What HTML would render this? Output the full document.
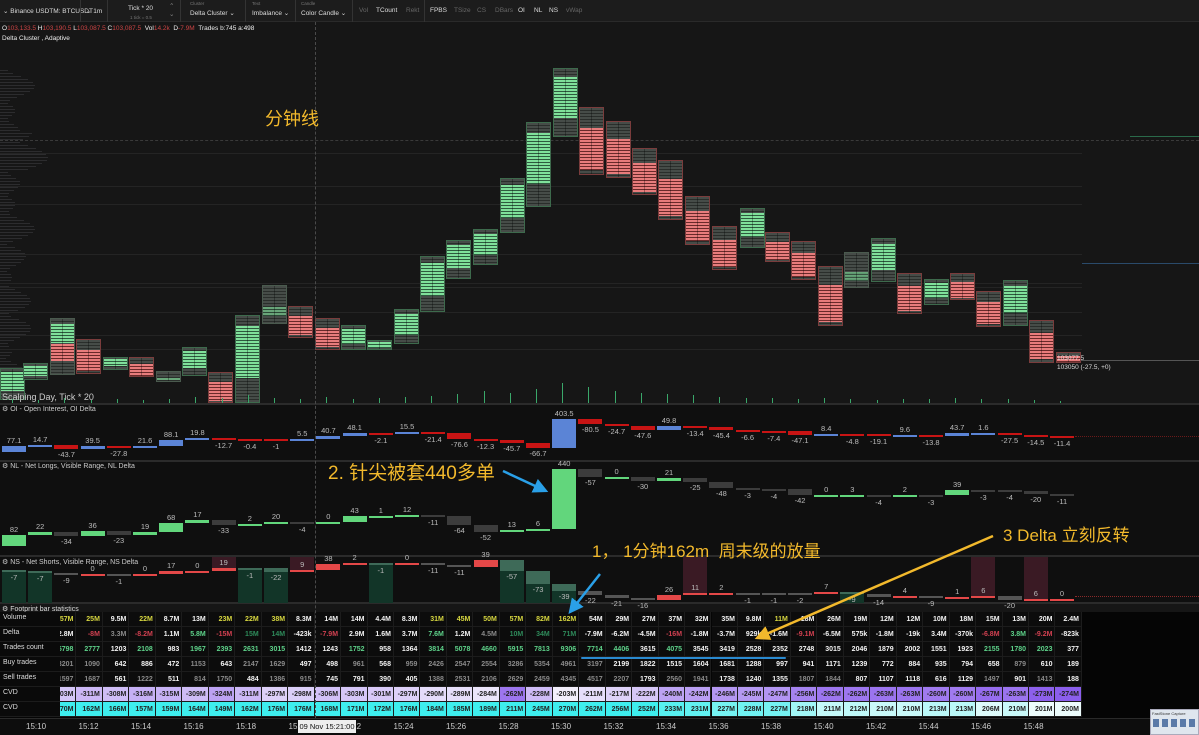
<!DOCTYPE html>
<html><head><meta charset="utf-8">
<style>
*{margin:0;padding:0;box-sizing:border-box}
body{width:1199px;height:735px;background:#161616;position:relative;overflow:hidden;font-family:"Liberation Sans","Noto Sans CJK SC",sans-serif;color:#ccc}
.a{position:absolute}
.tb{left:0;top:0;width:1199px;height:22px;background:#1c1c1c;border-bottom:1px solid #2a2a2a;font-size:6.5px;color:#ddd}
.tb span{position:absolute;top:7px;white-space:nowrap}
.tb .d{color:#666}
.tb small{position:absolute;top:1px;font-size:4.5px;color:#777;white-space:nowrap}
.sep{position:absolute;top:0;width:1px;height:22px;background:#333}
.lbl{font-size:7px;color:#ccc;white-space:nowrap}
.c{position:absolute;border:1px solid}
.z{position:absolute;left:0;right:0}
.cell{position:absolute;height:15px;font-size:7px;font-weight:bold;text-align:right;padding-right:2px;line-height:15px;border-right:1px solid #1c1c1c;border-bottom:1px solid #1c1c1c;overflow:hidden;white-space:nowrap}
.ann{color:#f2b92c;white-space:nowrap;font-family:"Liberation Sans","Noto Sans CJK SC",sans-serif}
.v{position:absolute;font-size:7.5px;color:#bbb;white-space:nowrap;transform:translateX(-50%)}
</style></head><body>
<div class="a tb">
<span style="left:3px">⌄ Binance USDTM: BTCUSDT</span><div class="sep" style="left:80px"></div>
<span style="left:86px">⌄ 1m</span><div class="sep" style="left:107px"></div>
<span style="left:128px;top:5px">Tick * 20</span><small style="left:130px;top:15px">1 tick = 0.5</small>
<span style="left:169px;top:2px;color:#888">⌃</span><span style="left:169px;top:10px;color:#888">⌄</span><div class="sep" style="left:180px"></div>
<small style="left:190px">Cluster</small><span style="left:190px;top:9px">Delta Cluster ⌄</span><div class="sep" style="left:245px"></div>
<small style="left:252px">Text</small><span style="left:252px;top:9px">Imbalance ⌄</span><div class="sep" style="left:295px"></div>
<small style="left:301px">Candle</small><span style="left:301px;top:9px">Color Candle ⌄</span><div class="sep" style="left:352px"></div>
<span class="d" style="left:359px">Vol</span><span style="left:376px">TCount</span><span class="d" style="left:406px">Rekt</span><div class="sep" style="left:424px"></div>
<span style="left:430px">FPBS</span><span class="d" style="left:454px">TSize</span><span class="d" style="left:477px">CS</span><span class="d" style="left:495px">DBars</span><span style="left:518px">OI</span><span style="left:534px">NL</span><span style="left:549px">NS</span><span class="d" style="left:566px">vWap</span>
</div>
<div class="a lbl" style="left:2px;top:25px;color:#eee;font-size:6.5px">O<span style="color:#c44">103,133.5</span> H<span style="color:#c44">103,190.5</span> L<span style="color:#c44">103,087.5</span> C<span style="color:#c44">103,087.5</span> &nbsp;Vol<span style="color:#c44">14.2k</span> &nbsp;D<span style="color:#c44">-7.9M</span> &nbsp;Trades b:745 a:498</div>
<div class="a lbl" style="left:2px;top:35px;color:#eee;font-size:6.5px">Delta Cluster , Adaptive</div>
<div id="root"></div>
<script>
var h='';
function A(s){h+=s}
for(var y=70;y<400;y+=3){var w=6+Math.abs(Math.sin(y*0.13)*18+Math.sin(y*0.05)*12);if(y>130&&y<170)w+=12;A('<div class="a" style="left:0;top:'+y+'px;width:'+w+'px;height:1px;background:#2c2c2e"></div>')}
[153,186,204,254,283,287,312,335,349].forEach(function(y){A('<div class="a" style="left:0;top:'+y+'px;width:1082px;height:1px;background:#242424"></div>')});
A('<div class="a" style="left:0;top:140px;width:1199px;border-top:1px dashed #3a3a3a"></div>');
A('<div class="a" style="left:1082px;top:263px;width:117px;height:1px;background:#2a4a6a"></div>');
A('<div class="a" style="left:1130px;top:136px;width:69px;height:1px;background:#2a6a4a"></div>');
A('<div class="a" style="left:1060px;top:360px;width:139px;height:1px;background:#555"></div>');
var C=[[0,368,400,'G'],[23,363,380,'G'],[50,318,375,'M'],[76,339,374,'R'],[103,357,370,'G'],[129,357,377,'R'],[156,371,382,'N'],[182,347,376,'G'],[208,372,403,'R'],[235,315,403,'G'],[262,285,324,'N'],[288,306,338,'R'],[315,318,350,'R'],[341,325,350,'G'],[367,340,350,'G'],[394,309,344,'G'],[420,256,312,'G'],[446,240,279,'G'],[473,229,265,'G'],[500,178,233,'G'],[526,122,207,'G'],[553,68,137,'G'],[579,107,175,'R'],[606,121,178,'R'],[632,148,195,'R'],[658,160,220,'R'],[685,196,245,'R'],[712,226,270,'R'],[740,208,248,'G'],[765,232,262,'R'],[791,241,280,'R'],[818,266,326,'R'],[844,252,288,'N'],[871,238,282,'G'],[897,273,314,'R'],[924,279,305,'G'],[950,273,300,'R'],[976,291,327,'R'],[1003,280,326,'G'],[1029,320,363,'R'],[1056,352,363,'R']];
var GS='repeating-linear-gradient(#7fe09a 0 2px,#2e5a3e 2px 3px)',RS='repeating-linear-gradient(#e87c7c 0 2px,#6a2a2a 2px 3px)',NS_='repeating-linear-gradient(#464c48 0 2px,#2a2e2b 2px 3px)';
C.forEach(function(c){var H=c[2]-c[1],t=c[3];var bc=t=='G'?'#3d6a4c':t=='R'?'#7a3c3c':'#4a5a4e';
A('<div class="c" style="left:'+c[0]+'px;top:'+c[1]+'px;width:25px;height:'+H+'px;border-color:'+bc+';background:'+NS_+'">');
if(t=='G')A('<div class="z" style="top:'+(H*0.12|0)+'px;height:'+(H*0.6|0)+'px;background:'+GS+'"></div>');
if(t=='R')A('<div class="z" style="top:'+(H*0.3|0)+'px;height:'+(H*0.62|0)+'px;background:'+RS+'"></div>');
if(t=='M'){A('<div class="z" style="top:'+(H*0.1|0)+'px;height:'+(H*0.35|0)+'px;background:'+GS+'"></div><div class="z" style="top:'+(H*0.45|0)+'px;height:'+(H*0.3|0)+'px;background:'+RS+'"></div>')}
if(t=='N')A('<div class="z" style="top:'+(H*0.55|0)+'px;height:'+(H*0.25|0)+'px;background:'+GS+';opacity:.6"></div>');
A('<div style="position:absolute;left:11px;top:0;bottom:0;width:1px;background:rgba(0,0,0,.3)"></div></div>')});
A('<div class="a lbl" style="left:1057px;top:355px;color:#ddd;font-size:6.5px">103077.5</div><div class="a lbl" style="left:1057px;top:364px;color:#ddd;font-size:6.5px">103050 (-27.5, +0)</div>');
for(var k=0;k<41;k++){var vh=[4,3,5,3,4,3,4,6,5,8,5,4,6,4,5,6,7,9,12,10,14,20,16,12,10,9,8,6,5,5,4,5,4,3,4,4,5,4,4,3,2][k];A('<div class="a" style="left:'+(12+k*26.2)+'px;top:'+(403-vh)+'px;width:1px;height:'+vh+'px;background:#3aa86a"></div>')}
A('<div class="a lbl" style="left:2px;top:392px;font-size:9px;color:#ccc">Scalping Day, Tick * 20</div>');
A('<div class="a" style="left:0;top:403px;width:1199px;height:200px;background:#0f0f0f"></div>');
[403,460,555,602].forEach(function(y){A('<div class="a" style="left:0;top:'+y+'px;width:1199px;height:2px;background:#2b2b2b"></div>')});
A('<div class="a lbl" style="left:2px;top:405px">⚙ OI - Open Interest, OI Delta</div><div class="a lbl" style="left:2px;top:462px">⚙ NL - Net Longs, Visible Range, NL Delta</div><div class="a lbl" style="left:2px;top:558px">⚙ NS - Net Shorts, Visible Range, NS Delta</div><div class="a lbl" style="left:2px;top:605px;color:#ddd">⚙ Footprint bar statistics</div>');
function WF(vals,y0,sc,pc,nc,ymin,ymax,extra){var L=y0;vals.forEach(function(v,k){var N=L-v*sc;if(N<ymin)N=ymin;if(N>ymax)N=ymax;var t=Math.min(L,N),b=Math.max(L,N);if(b-t<2)b=t+2;var x=2+k*26.2;var col=v>=0?pc:nc;if(extra)col=extra(k,v,t,b,x)||col;
A('<div class="a" style="left:'+x+'px;top:'+t+'px;width:24px;height:'+(b-t)+'px;background:'+col+'"></div>');
var lab=(v>=0)?'<div class="v" style="left:'+(x+12)+'px;top:'+(t-10)+'px">'+v+'</div>':'<div class="v" style="left:'+(x+12)+'px;top:'+(b+1)+'px">'+v+'</div>';A(lab);L=N})}
WF([77.1,14.7,-43.7,39.5,-27.8,21.6,88.1,19.8,-12.7,-0.4,-1,5.5,40.7,48.1,-2.1,15.5,-21.4,-76.6,-12.3,-45.7,-66.7,403.5,-80.5,-24.7,-47.6,49.8,-13.4,-45.4,-6.6,-7.4,-47.1,8.4,-4.8,-19.1,9.6,-13.8,43.7,1.6,-27.5,-14.5,-11.4],452,0.072,'#5b84d6','#c81414',412,458);
A('<div class="a" style="left:1075px;top:436px;width:124px;border-top:1px dotted #6a1a1a"></div>');
WF([82,22,-34,36,-23,19,68,17,-33,2,20,-4,0,43,1,12,-11,-64,-52,13,6,440,-57,0,-30,21,-25,-48,-3,-4,-42,0,3,-4,2,-3,39,-3,-4,-20,-11],546,0.138,'#62d67c','#3c3c3c',469,553);
var gH=[0,1,9,10,14,19,20,21,32],mH=[8,11,26,37,39];
var nsv=[-7,-7,-9,0,-1,0,17,0,19,-1,-22,9,38,2,-1,0,-11,-11,39,-57,-73,-39,-22,-21,-16,26,11,2,-1,-1,-2,7,-9,-14,4,-9,1,6,-20,6,0];
WF(nsv,570,0.18,'#e44848','#555',558,600,function(k,v,t,b,x){if(gH.indexOf(k)>=0){A('<div class="a" style="left:'+x+'px;top:'+b+'px;width:24px;height:'+(603-b)+'px;background:#123528"></div>');return '#3e6a58'}if(mH.indexOf(k)>=0){A('<div class="a" style="left:'+x+'px;top:557px;width:24px;height:'+(t-557)+'px;background:#3a1a24"></div>')}});
A('<div class="a" style="left:1075px;top:596px;width:124px;border-top:1px dotted #8a2a2a"></div>');
A('<div class="a" style="left:0;top:612px;width:1199px;height:106px;background:#050505"></div>');
var labs=['Volume','Delta','Trades count','Buy trades','Sell trades','CVD','CVD'];
var Y='#d6d640',W='#f2f2f2',Gd='#8a8a8a',Gr='#5ed28a',Rd='#d04050',Gx='#2e8a5a';
function P(s){return s.split(',').map(function(e){var p=e.split('|');return [p[0],p[1]||'w']})}
var rows=[
P('57M|y,25M|y,9.5M,22M|y,8.7M,13M,23M|y,22M|y,38M|y,8.3M,14M,14M,4.4M,8.3M,31M|y,45M|y,50M|y,57M|y,82M|y,162M|y,54M,29M,27M,37M,32M,35M,9.8M,11M|y,18M,26M,19M,12M,12M,10M,18M,15M,13M,20M,2.4M'),
P('2.8M,-8M|R,3.3M|g,-8.2M|R,1.1M,5.8M|G,-15M|R,15M|X,14M|X,-423k,-7.9M|r,2.9M,1.6M,3.7M,7.6M|G,1.2M,4.5M|g,10M|X,34M|X,71M|X,-7.9M,-6.2M,-4.5M,-16M|R,-1.8M,-3.7M,929k,-1.6M,-9.1M|R,-6.5M,575k,-1.8M,-19k,3.4M,-370k,-6.8M|R,3.8M|G,-9.2M|R,-823k'),
P('5798|G,2777|G,1203,2108|G,983,1967|G,2393|G,2631|G,3015|G,1412,1243,1752|G,958,1364,3814|G,5078|G,4660|G,5915|G,7813|G,9306|G,7714|G,4406|G,3615,4075|G,3545,3419,2528,2352,2748,3015,2046,1879,2002,1551,1923,2155|G,1780|G,2023|G,377'),
P('3201|g,1090|g,642,886,472,1153|g,643,2147|g,1629|g,497,498,961|g,568,959|g,2426|g,2547|g,2554|g,3286|g,5354|g,4961|g,3197|g,2199,1822,1515,1604,1681,1288,997,941,1171,1239,772,884,935,794,658,879|g,610,189'),
P('1597|g,1687|g,561,1222|g,511,814|g,1750|g,484,1386|g,915|g,745,791,390,405,1388|g,2531|g,2106|g,2629|g,2459|g,4345|g,4517|g,2207|g,1793,2560|g,1941|g,1738,1240,1355,1807|g,1844|g,807,1107,1118,616,1129,1497|g,901,1413|g,188')];
var cv1=[-303,-311,-308,-316,-315,-309,-324,-311,-297,-298,-306,-303,-301,-297,-290,-289,-284,-262,-228,-203,-211,-217,-222,-240,-242,-246,-245,-247,-256,-262,-262,-263,-263,-260,-260,-267,-263,-273,-274];
var cv2=[170,162,166,157,159,164,149,162,176,176,168,171,172,176,184,185,189,211,245,270,262,256,252,233,231,227,228,227,218,211,212,210,210,213,213,206,210,201,200];
var cm={y:Y,w:W,g:Gd,G:Gr,R:Rd,r:Rd,X:Gx};
function mix(a,b,t){return 'rgb('+[0,1,2].map(function(i){return Math.round(a[i]+(b[i]-a[i])*t)}).join(',')+')'}
var cw=26.46,x0=50;
for(var j=0;j<39;j++){var x=x0+j*cw;
for(var r=0;r<5;r++){var d=rows[r][j];A('<div class="cell" style="left:'+x+'px;top:'+(612+r*15)+'px;width:'+cw+'px;background:#0c0c0c;color:'+cm[d[1]]+'">'+d[0]+'</div>')}
var v=cv1[j],t;if(j<17)t=Math.max(0,Math.min(1,(-v-285)/40))*0.45+0.1;else t=Math.max(0,Math.min(1,(-v-200)/75));
A('<div class="cell" style="left:'+x+'px;top:687px;width:'+cw+'px;color:#222;background:'+mix([246,244,252],[138,92,236],t)+'">'+v+'M</div>');
var u=cv2[j],s;if(j<23)s=1;else s=Math.max(0,Math.min(1,(u-203)/35));
A('<div class="cell" style="left:'+x+'px;top:702px;width:'+cw+'px;color:#222;background:'+mix([236,252,252],[62,238,238],s)+'">'+u+'M</div>')}
A('<div class="a" style="left:0;top:612px;width:60px;height:105px;background:#0a0a0a"></div>');
labs.forEach(function(l,i){A('<div class="a lbl" style="left:3px;top:'+(614+i*15)+'px;font-size:7px;color:#ddd">'+l+'</div><div class="a" style="left:0;top:'+(626+i*15)+'px;width:60px;height:1px;background:#1c1c1c"></div>')});
A('<div class="a" style="left:0;top:718px;width:1199px;height:17px;background:#0d0d0d;border-top:1px solid #2a2a2a"></div>');
for(var m=0;m<20;m++){var mm=10+m*2;A('<div class="a lbl" style="left:'+(26+m*52.5)+'px;top:722px;font-size:8px;color:#ccc">15:'+mm+'</div>')}
A('<div class="a lbl" style="left:298px;top:720px;width:58px;height:13px;background:#eee;color:#111;font-size:7.5px;line-height:13px;text-align:center">09 Nov 15:21:00</div>');
A('<div class="a" style="left:315px;top:22px;height:696px;border-left:1px dashed #4a4a4a"></div>');
A('<div class="a" style="left:581px;top:657px;width:205px;height:2px;background:#2a8ad0;border-radius:1px"></div>');
A('<div class="a" style="left:1150px;top:709px;width:49px;height:26px;background:#dfe6ee;border:1px solid #aab"><div style="font-size:4px;color:#333;padding:1px">FastStone Capture</div><div style="margin:2px;height:8px;background:repeating-linear-gradient(90deg,#5a7aa8 0 6px,transparent 6px 9px)"></div></div>');
document.getElementById('root').innerHTML=h;
</script>
<svg class="a" style="left:0;top:0" width="1199" height="735">
<defs>
<marker id="mb" markerWidth="6" markerHeight="6" refX="5" refY="3" orient="auto"><path d="M0,0 L6,3 L0,6 Z" fill="#2aa0e8"/></marker>
<marker id="my" markerWidth="6" markerHeight="6" refX="5" refY="3" orient="auto"><path d="M0,0 L6,3 L0,6 Z" fill="#f2b92c"/></marker>
</defs>
<line x1="503" y1="471" x2="546" y2="491" stroke="#2aa0e8" stroke-width="2.5" marker-end="url(#mb)"/>
<line x1="600" y1="574" x2="570" y2="612" stroke="#2aa0e8" stroke-width="2.5" marker-end="url(#mb)"/>
<line x1="993" y1="536" x2="757" y2="638" stroke="#f2b92c" stroke-width="2.5" marker-end="url(#my)"/>
</svg>
<div class="a ann" style="left:265px;top:105px;font-size:18px">分钟线</div>
<div class="a ann" style="left:328px;top:458px;font-size:19px">2. 针尖被套440多单</div>
<div class="a ann" style="left:592px;top:537px;font-size:17px">1，  1分钟162m &nbsp;周末级的放量</div>
<div class="a ann" style="left:1003px;top:521px;font-size:17px">3 Delta 立刻反转</div>
</body></html>
